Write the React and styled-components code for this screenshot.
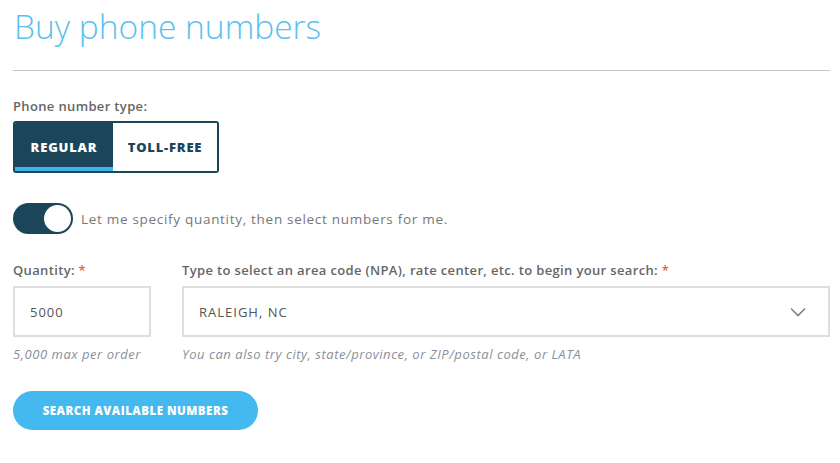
import React, { useState } from 'react';
import styled, { createGlobalStyle } from 'styled-components';

const GlobalStyle = createGlobalStyle`
  body {
    margin: 0;
    background: #fff;
    font-family: "Open Sans", "Liberation Sans", sans-serif;
  }
`;

const Page = styled.div`
  padding: 0 10px 0 13px;
`;

const Title = styled.h1`
  margin: 0;
  padding: 4px 0 0 1px;
  height: 50px;
  font-family: "Open Sans", sans-serif;
  font-weight: 300;
  font-size: 33.5px;
  line-height: 44px;
  color: #5cc0ee;
`;

const Divider = styled.hr`
  margin: 16px 0 0;
  border: none;
  border-top: 1px solid #c4c4c4;
`;

const Label = styled.div`
  font-size: 13px;
  font-weight: 600;
  color: #666;
  line-height: 18px;
  letter-spacing: 0.35px;
`;

const Required = styled.span`
  color: #e8643c;
`;

const TypeSection = styled.div`
  margin-top: 26px;
  display: flex;
  flex-direction: column;
  gap: 6px;
`;

const Segmented = styled.div`
  display: inline-flex;
  align-self: flex-start;
  border: 2px solid #1b4558;
  border-radius: 3px;
  height: 48px;
  overflow: hidden;
`;

const Segment = styled.button`
  border: none;
  margin: 0;
  padding: 0;
  width: ${p => p.$w}px;
  font-family: "Open Sans", sans-serif;
  font-size: 13px;
  font-weight: 800;
  letter-spacing: 0.8px;
  background: ${p => (p.$active ? '#1b4558' : '#fff')};
  color: ${p => (p.$active ? '#fff' : '#1b4558')};
  box-shadow: ${p => (p.$active ? 'inset 0 -4px 0 #3fb5ea' : 'none')};
  cursor: pointer;
`;

const ToggleRow = styled.label`
  margin-top: 30px;
  display: flex;
  align-items: center;
  gap: 8px;
  font-size: 13.5px;
  color: #777;
  letter-spacing: 0.7px;
`;

const Track = styled.span`
  width: 60px;
  height: 31px;
  border-radius: 16px;
  background: #1b4558;
  display: flex;
  align-items: center;
  justify-content: ${p => (p.$on ? 'flex-end' : 'flex-start')};
  padding: 0 2px;
  box-sizing: border-box;
  flex-shrink: 0;
`;

const Knob = styled.span`
  width: 27px;
  height: 27px;
  border-radius: 50%;
  background: #fff;
`;

const Fields = styled.div`
  margin-top: 27px;
  display: grid;
  grid-template-columns: 138px 1fr;
  column-gap: 31px;
`;

const Field = styled.div`
  display: flex;
  flex-direction: column;
`;

const Box = styled.div`
  margin-top: 7px;
  height: 51px;
  border: 2px solid #dedede;
  box-sizing: border-box;
  display: flex;
  align-items: center;
  justify-content: space-between;
  padding: 0 22px 0 15px;
  font-size: 13px;
  color: #555;
  letter-spacing: 1px;
`;

const Hint = styled.div`
  margin-top: 8px;
  font-size: 13px;
  font-style: italic;
  color: #8a8f99;
  letter-spacing: 0.55px;
`;

const SearchButton = styled.button`
  margin-top: 28px;
  height: 39px;
  width: 245px;
  border: none;
  border-radius: 20px;
  background: #43b9ef;
  color: #fff;
  font-family: "Open Sans", sans-serif;
  font-size: 11.5px;
  font-weight: 800;
  letter-spacing: 0.5px;
  cursor: pointer;
`;

const Chevron = () => (
  <svg width="16" height="10" viewBox="0 0 16 10" fill="none">
    <path d="M1 1.5l7 7 7-7" stroke="#7a8088" strokeWidth="1.6" />
  </svg>
);

export default function App() {
  const [type, setType] = useState('regular');
  const [on, setOn] = useState(true);
  return (
    <Page>
      <GlobalStyle />
      <Title>Buy phone numbers</Title>
      <Divider />
      <TypeSection>
        <Label>Phone number type:</Label>
        <Segmented>
          <Segment $w={98} $active={type === 'regular'} onClick={() => setType('regular')}>REGULAR</Segment>
          <Segment $w={104} $active={type === 'tollfree'} onClick={() => setType('tollfree')}>TOLL-FREE</Segment>
        </Segmented>
      </TypeSection>
      <ToggleRow onClick={() => setOn(!on)}>
        <Track $on={on}><Knob /></Track>
        Let me specify quantity, then select numbers for me.
      </ToggleRow>
      <Fields>
        <Field>
          <Label>Quantity: <Required>*</Required></Label>
          <Box>5000</Box>
          <Hint>5,000 max per order</Hint>
        </Field>
        <Field>
          <Label>Type to select an area code (NPA), rate center, etc. to begin your search: <Required>*</Required></Label>
          <Box>RALEIGH, NC<Chevron /></Box>
          <Hint>You can also try city, state/province, or ZIP/postal code, or LATA</Hint>
        </Field>
      </Fields>
      <SearchButton>SEARCH AVAILABLE NUMBERS</SearchButton>
    </Page>
  );
}
